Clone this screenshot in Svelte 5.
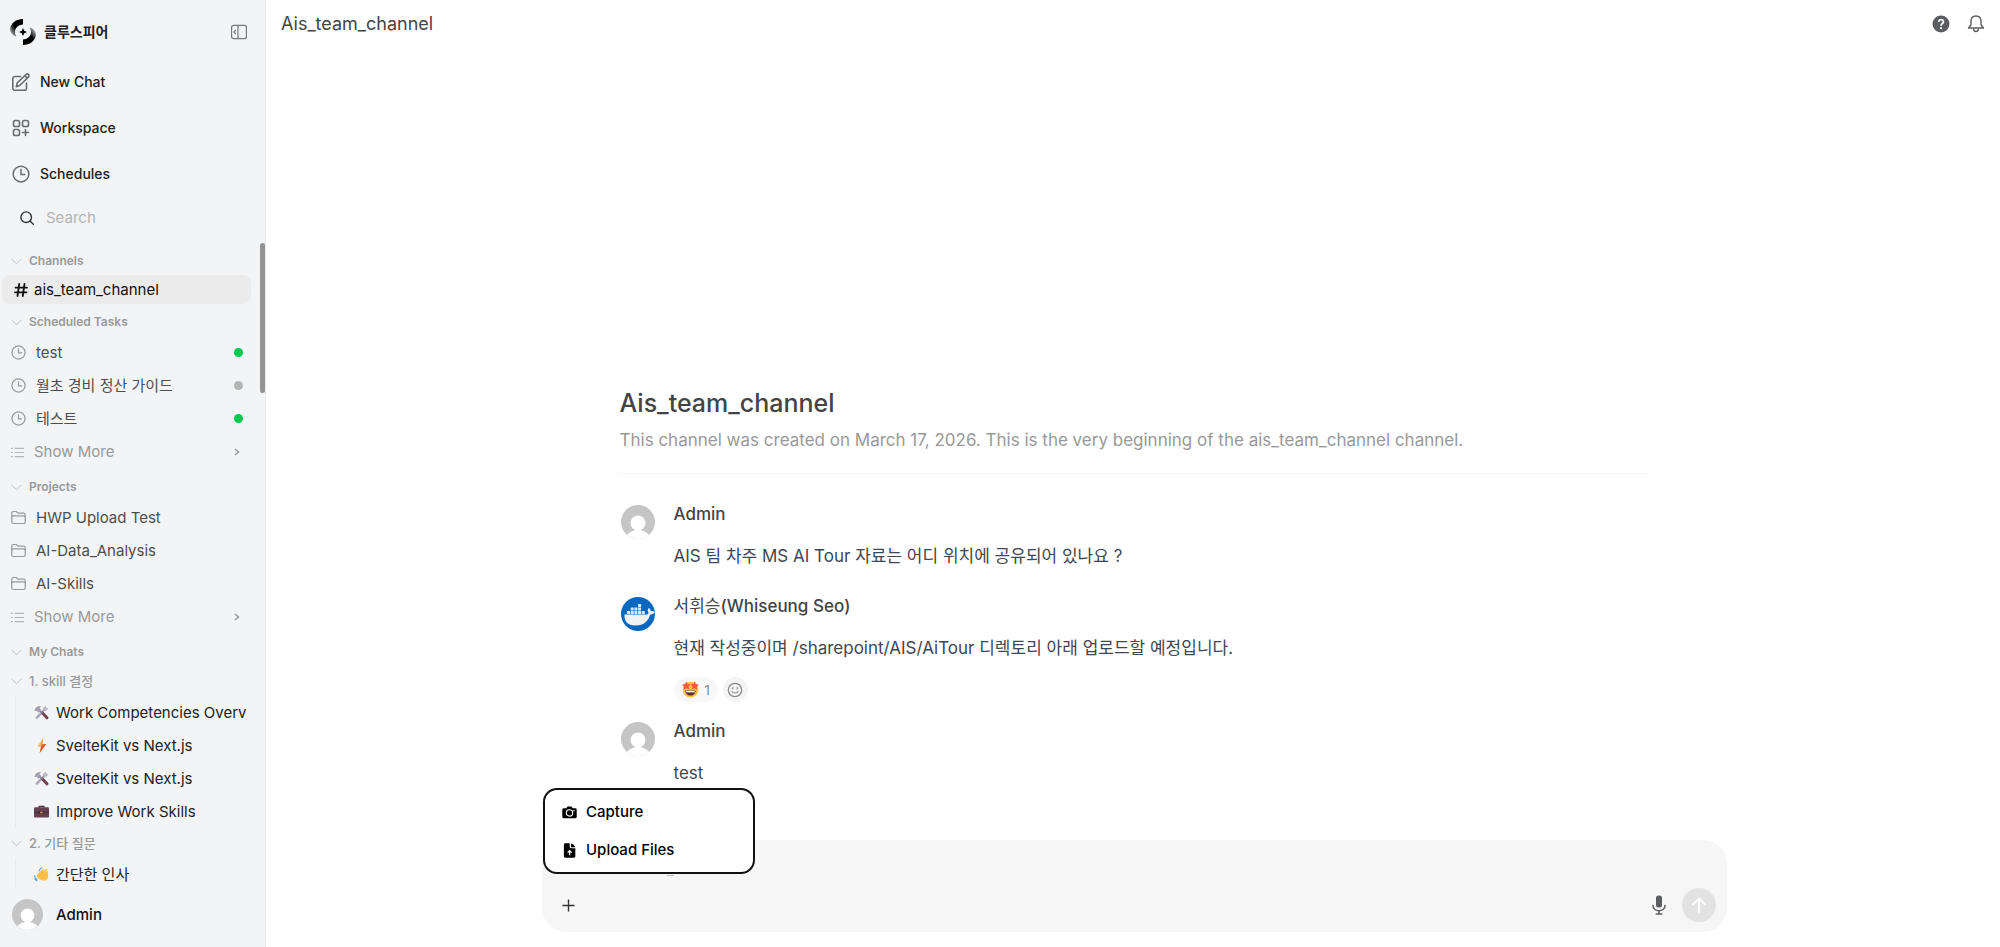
<script lang="ts">
	type Task = { name: string; active: boolean };
	type Chat = { icon: string; title: string };
	type Folder = { name: string; chats: Chat[] };
	type Message = {
		localName?: string;
		author: string;
		avatar: string;
		text: string;
		reactions?: number;
	};

	const navItems = [
		{ icon: 'edit', label: 'New Chat' },
		{ icon: 'grid', label: 'Workspace' },
		{ icon: 'clock', label: 'Schedules' }
	];

	const tasks: Task[] = [
		{ name: 'test', active: true },
		{ name: '월초 경비 정산 가이드', active: false },
		{ name: '테스트', active: true }
	];

	const projects = ['HWP Upload Test', 'AI-Data_Analysis', 'AI-Skills'];

	const folders: Folder[] = [
		{
			name: '1. skill 결정',
			chats: [
				{ icon: 'tools', title: 'Work Competencies Overv' },
				{ icon: 'bolt', title: 'SvelteKit vs Next.js' },
				{ icon: 'tools', title: 'SvelteKit vs Next.js' },
				{ icon: 'case', title: 'Improve Work Skills' }
			]
		},
		{ name: '2. 기타 질문', chats: [{ icon: 'wave', title: '간단한 인사' }] }
	];

	const messages: Message[] = [
		{
			author: 'Admin',
			avatar: 'user',
			text: 'AIS 팀 차주 MS AI Tour 자료는 어디 위치에 공유되어 있나요 ?'
		},
		{
			localName: '서휘승',
			author: '(Whiseung Seo)',
			avatar: 'docker',
			text: '현재 작성중이며 /sharepoint/AIS/AiTour 디렉토리 아래 업로드할 예정입니다.',
			reactions: 1
		},
		{ author: 'Admin', avatar: 'user', text: 'test' }
	];

	let search = $state('');
	let prompt = $state('');
	let menuOpen = $state(true);
</script>

{#snippet clock()}
	<svg viewBox="0 0 24 24" fill="none" stroke="currentColor" stroke-width="2" stroke-linecap="round">
		<circle cx="12" cy="12" r="10.5" />
		<path d="M12 6v6.5h5" />
	</svg>
{/snippet}

{#snippet userAvatar()}
	<svg viewBox="0 0 34 34">
		<circle cx="17" cy="17" r="17" fill="#c5c5c5" />
		<circle cx="17" cy="18" r="7.5" fill="#fff" />
		<path d="M6 30c2-3 7-5 11-5s9 2 11 5a17 17 0 0 1-22 0z" fill="#fff" />
	</svg>
{/snippet}

{#snippet sectionTitle(label: string)}
	<button class="section-title">
		<svg viewBox="0 0 12 12" fill="none" stroke="currentColor" stroke-linecap="round">
			<path d="M1 3.500l5 5 5-5" />
		</svg>
		<span>{label}</span>
	</button>
{/snippet}

{#snippet showMore()}
	<button class="show-more">
		<svg class="list-icon" viewBox="0 0 14 14" fill="none" stroke="currentColor" stroke-width="1.3">
			<path d="M4 2.5h10M4 7h10M4 11.5h10M0 2.5h2M0 7h2M0 11.5h2" />
		</svg>
		<span class="row-label">Show More</span>
		<svg class="chevron" viewBox="0 0 12 12" fill="none" stroke="currentColor" stroke-width="1.5">
			<path d="M4 3l3.5 3L4 9" />
		</svg>
	</button>
{/snippet}

{#snippet emoji(name: string)}
	<svg viewBox="0 0 16 16">
		{#if name === 'tools'}
			<path d="M3 13.500L12 4" stroke="#aba6b8" stroke-width="2.600" stroke-linecap="round" />
			<path d="M10 3l2.500-2.500.5 2.500 2.500.5L13 6l-3 .3z" fill="#b9b5c3" />
			<path d="M9 8.500l4.800 5.200" stroke="#75404e" stroke-width="3.200" stroke-linecap="round" />
			<path d="M5 5l4 4" stroke="#8c8796" stroke-width="2" />
			<path d="M.5 6.300C1 3 3.500 1 7.500 1.200L5.800 3.300l2 2.200-3 2.700-1.600-1.800z" fill="#a5a0b0" />
		{:else if name === 'bolt'}
			<path d="M10 0L4 9h3.6L6 16l7-9.5H9z" fill="#f58a3c" />
			<path d="M10 0L4 9h2.6z" fill="#ffc168" />
			<path d="M7.6 9L6 16l7-9.5-3 .2z" fill="#e4572e" />
		{:else if name === 'case'}
			<path d="M5.5 4V2.5h5V4" fill="none" stroke="#49303d" stroke-width="1.4" />
			<rect x="0" y="3.5" width="16" height="11" rx="1.2" fill="#65404f" />
			<path d="M0 9h16" stroke="#412c38" stroke-width="1" />
			<path d="M5 7.5h6v3H5z" fill="#422c38" />
			<path d="M6.5 8.2h3v1.6h-3z" fill="#d58b4c" />
		{:else if name === 'wave'}
			<path
				d="M3.5 8L9 2.2c1-.9 2 0 1.4 1L9 5l3.8-3c1-.7 1.800.3 1.200 1.200L12.500 5c2-1.200 3 0 2.500 1.500v5C14.500 14 12 15 9.500 14.500 6 14 4 12 3 10.500z"
				fill="#fcc54a"
			/>
			<path d="M5 9.500c3 0 4-2 4-4M8 12c2-.5 4-2.500 4-5" fill="none" stroke="#e79a35" stroke-width=".8" />
			<path
				d="M5.500 4C6 2.500 7 1 8.500.8M.5 9.500c.3 1.800 1 2.800 2.500 3.500M1 12.500c.4 1 1 1.500 2 2"
				fill="none"
				stroke="#55a5e0"
				stroke-width="1.300"
				stroke-linecap="round"
			/>
		{:else}
			<circle cx="8" cy="8.200" r="7.400" fill="#fcc13f" />
			<path d="M3.200 9h9.600c0 3-2 4.700-4.800 4.700S3.200 12 3.200 9z" fill="#61302c" />
			<path d="M4 9.300h8v1.400H4z" fill="#fff" />
			<path
				d="M4 .5l1.200 2.400 2.700.1-1.800 2.100.7 2.900L4.200 6.800 1.700 8l.4-2.700L0 3.300l2.800-.3zM12 .5l1.200 2.500 2.800.3-2.100 2 .4 2.700-2.500-1.200-2.600 1.200.7-2.900-1.800-2.100 2.700-.1z"
				fill="#ef5a36"
			/>
		{/if}
	</svg>
{/snippet}

<div class="app">
	<aside class="sidebar">
		<div class="brand">
			<svg class="logo" viewBox="0 0 26 26">
				<defs>
					<linearGradient id="fade-left" x1="1" y1="0" x2="0" y2="1">
						<stop offset=".55" stop-color="#000" />
						<stop offset="1" stop-color="#000" stop-opacity="0" />
					</linearGradient>
					<linearGradient id="fade-right" x1="0" y1="1" x2="1" y2="0">
						<stop offset=".55" stop-color="#000" />
						<stop offset="1" stop-color="#000" stop-opacity="0" />
					</linearGradient>
				</defs>
				<path d="M13 0v5.500C8 6 5 9 5 13c0 2 .6 3.300 1.500 4.500C2 16 0 13.500 0 10 1 4 6 0 13 0z" fill="url(#fade-left)" />
				<path d="M13 26v-5.500c5-.5 8-3.500 8-7.500 0-2-.6-3.300-1.500-4.500C24 10 26 12.500 26 16c-1 6-6 10-13 10z" fill="url(#fade-right)" />
				<path d="M13 9l1.200 2.800L17 13l-2.800 1.200L13 17l-1.200-2.800L9 13l2.800-1.200z" />
			</svg>
			<span class="brand-name">클루스피어</span>
			<button class="toggle" aria-label="Toggle sidebar">
				<svg viewBox="0 0 16 16" fill="none" stroke="currentColor" stroke-width="1.2">
					<rect x=".6" y="1.300" width="14.800" height="13.400" rx="2" />
					<path d="M7 1.300v13.400M4.800 6L3 8l1.800 2" />
				</svg>
			</button>
		</div>

		<nav>
			{#each navItems as item}
				<a class="nav-item" href="#{item.icon}">
					{#if item.icon === 'edit'}
						<svg viewBox="0 0 18 18" fill="none" stroke="currentColor" stroke-width="1.600" stroke-linejoin="round" stroke-linecap="round">
							<path d="M8.500 3.500H2.800a2 2 0 0 0-2 2v9.700a2 2 0 0 0 2 2h9.700a2 2 0 0 0 2-2V10" />
							<path d="M14 1.500a1.700 1.700 0 0 1 2.500 2.400L8 12.300l-3.700 1.400 1-3.800zM13 3l2.300 2.200" />
						</svg>
					{:else if item.icon === 'grid'}
						<svg viewBox="0 0 18 18" fill="none" stroke="currentColor" stroke-width="1.600" stroke-linecap="round">
							<rect x="1.500" y="1.500" width="6" height="6" rx="1.800" />
							<rect x="10.500" y="1.500" width="6" height="6" rx="1.800" />
							<rect x="1.500" y="10.500" width="6" height="6" rx="1.800" />
							<path d="M13.500 10.500v6M10.500 13.500h6" />
						</svg>
					{:else}
						{@render clock()}
					{/if}
					<span>{item.label}</span>
				</a>
			{/each}
		</nav>

		<label class="search">
			<svg viewBox="0 0 14 14" fill="none" stroke="currentColor" stroke-width="1.400" stroke-linecap="round">
				<circle cx="6.200" cy="6.200" r="5.300" />
				<path d="M10 10l3.300 3.300" />
			</svg>
			<input type="text" placeholder="Search" aria-label="Search" bind:value={search} />
		</label>

		<div class="scroll-area">
			<div class="scroll-thumb"></div>

			<section>
				{@render sectionTitle('Channels')}
				<a class="channel" href="#channel">
					<svg viewBox="0 0 14 14" fill="none" stroke="currentColor" stroke-width="1.800" stroke-linecap="round">
						<path d="M5.200 1L3.500 13M10.500 1L8.800 13M1.500 4.700h11.500M1 9.300h11.500" />
					</svg>
					<span>ais_team_channel</span>
				</a>
			</section>

			<section>
				{@render sectionTitle('Scheduled Tasks')}
				{#each tasks as task}
					<a class="row" href="#task">
						{@render clock()}
						<span class="row-label">{task.name}</span>
						<span class="status" class:active={task.active}></span>
					</a>
				{/each}
				{@render showMore()}
			</section>

			<section>
				{@render sectionTitle('Projects')}
				{#each projects as project}
					<a class="row" href="#project">
						<svg viewBox="0 0 15 15" fill="none" stroke="currentColor" stroke-width="1.200" stroke-linejoin="round">
							<path d="M.8 12V3a1.500 1.500 0 0 1 1.500-1.500h3l1.700 1.700h5.700a1.500 1.500 0 0 1 1.500 1.500V12a1.500 1.500 0 0 1-1.500 1.500H2.300A1.500 1.500 0 0 1 .8 12z" />
							<path d="M.8 7.300a1.500 1.500 0 0 1 1.500-1.500h10.400a1.500 1.500 0 0 1 1.500 1.500" />
						</svg>
						<span class="row-label">{project}</span>
					</a>
				{/each}
				{@render showMore()}
			</section>

			<section>
				{@render sectionTitle('My Chats')}
				{#each folders as folder}
					<div class="folder">
						{@render sectionTitle(folder.name)}
						<div class="folder-chats">
							{#each folder.chats as chat}
								<a class="chat" href="#chat">
									{@render emoji(chat.icon)}
									<span>{chat.title}</span>
								</a>
							{/each}
						</div>
					</div>
				{/each}
			</section>
		</div>

		<button class="account">
			{@render userAvatar()}
			<span>Admin</span>
		</button>
	</aside>

	<main>
		<header class="topbar">
			<span class="topbar-title">Ais_team_channel</span>
			<button aria-label="Help">
				<svg viewBox="0 0 18 18">
					<circle cx="9" cy="9" r="8.500" fill="#5c5d60" />
					<path d="M6.700 7c0-3 4.800-3 4.800-.2C11.500 8.500 9 8.500 9 10.700" fill="none" stroke="#fff" stroke-width="1.700" />
					<circle cx="9" cy="13.200" r="1.100" fill="#fff" />
				</svg>
			</button>
			<button aria-label="Notifications">
				<svg viewBox="0 0 18 18" fill="none" stroke="#5c5d60" stroke-width="1.400" stroke-linejoin="round">
					<path d="M9 1C5.800 1 4 3.300 4 6.300v3.500L1.500 13h15L14 9.800V6.300C14 3.300 12.200 1 9 1z" />
					<path d="M6.500 13.500c0 4 5 4 5 0" />
				</svg>
			</button>
		</header>

		<div class="messages">
			<div class="intro">
				<h1>Ais_team_channel</h1>
				<p>
					This channel was created on March 17, 2026. This is the very beginning of the
					ais_team_channel channel.
				</p>
			</div>

			{#each messages as message}
				<article class="message">
					<div class="avatar">
						{#if message.avatar === 'docker'}
							<svg viewBox="0 0 34 34">
								<circle cx="17" cy="17" r="17" fill="#0868c0" />
								<path
									d="M3.500 17.500h22c1.500 0 2-1 2-2-1.300-1.800-.8-3.500.5-4.500 1.200.8 1.700 2 1.600 3 1.500-.3 3 .1 4.200.8-.6 1.800-2.300 2.800-4.500 2.700C27 25 21.500 29 14 28.500 7 28.500 3 24.500 3.500 17.500z"
									fill="#f1f2f4"
								/>
								<path
									d="M6 14h3v3H6zM9.700 14h3v3h-3zM13.400 14h3v3h-3zM17.100 14h3v3h-3zM20.800 14h3v3h-3zM9.700 10.500h3v3h-3zM13.400 10.500h3v3h-3zM17.100 10.500h3v3h-3zM17.100 7h3v3h-3z"
									fill="#d9ebfb"
								/>
							</svg>
						{:else}
							{@render userAvatar()}
						{/if}
					</div>
					<div class="message-body">
						<div class="author">
							{#if message.localName}<span class="local-name">{message.localName}</span>{/if}{message.author}
						</div>
						<p>{message.text}</p>
						{#if message.reactions}
							<div class="reactions">
								<button class="reaction">
									{@render emoji('star')}
									<span>{message.reactions}</span>
								</button>
								<button class="add-reaction" aria-label="Add reaction">
									<svg viewBox="0 0 16 16" fill="none" stroke="currentColor" stroke-linecap="round">
										<circle cx="8" cy="8" r="6.700" stroke-width="1.200" />
										<path d="M5 9.500c1 2 5 2 6 0M5.800 5.500v1.300M10.200 5.500v1.300" stroke-width="1.200" />
									</svg>
								</button>
							</div>
						{/if}
					</div>
				</article>
			{/each}
		</div>

		<form class="composer">
			<textarea rows="1" aria-label="Message" bind:value={prompt}></textarea>
			<span class="caret-mark"></span>
			<div class="composer-actions">
				<button
					type="button"
					class="plus"
					aria-label="More"
					aria-expanded={menuOpen}
					onclick={() => (menuOpen = !menuOpen)}
				>
					<svg viewBox="0 0 14 14" fill="none" stroke="currentColor" stroke-width="1.500">
						<path d="M7 .5v13M.5 7h13" />
					</svg>
				</button>
				<button type="button" class="mic" aria-label="Voice input">
					<svg viewBox="0 0 14 20" fill="none" stroke="currentColor" stroke-width="1.600" stroke-linecap="round">
						<rect x="4" y=".5" width="6" height="12" rx="2.500" fill="currentColor" stroke="none" />
						<path d="M1 10.500c0 7 12 7 12 0M7 16v3M4.300 19h5.400" />
					</svg>
				</button>
				<button type="submit" class="send" aria-label="Send" disabled>
					<svg viewBox="0 0 16 16" fill="none" stroke="#fff" stroke-width="1.800" stroke-linecap="round" stroke-linejoin="round">
						<path d="M8 15V1.500M2 7.500l6-6 6 6" />
					</svg>
				</button>
			</div>

			{#if menuOpen}
				<div class="menu">
					<button type="button">
						<svg viewBox="0 0 16 16">
							<path d="M4.500 3.500L6 1.500h4l1.500 2H14A1.700 1.700 0 0 1 15.700 5v7.500a1.700 1.700 0 0 1-1.700 1.700H2a1.700 1.700 0 0 1-1.700-1.700V5A1.700 1.700 0 0 1 2 3.500z" />
							<circle cx="8" cy="8.500" r="3.400" fill="none" stroke="#fff" stroke-width="1.200" />
							<circle cx="12.800" cy="6" r=".8" fill="#fff" />
						</svg>
						<span>Capture</span>
					</button>
					<button type="button">
						<svg viewBox="0 0 16 16">
							<path d="M3.500.3h4.700v3.500A1.700 1.700 0 0 0 9.900 5.500h4.300v8.700a1.500 1.500 0 0 1-1.500 1.500H3.500A1.500 1.500 0 0 1 2 14.200V1.800A1.500 1.500 0 0 1 3.500.3z" />
							<path d="M9.500.5c2 .5 4.300 2 4.600 3.900H9.500z" />
							<path d="M8.200 13V8.500M6 10.300l2.200-2.200 2.200 2.200" fill="none" stroke="#fff" stroke-width="1.300" />
						</svg>
						<span>Upload Files</span>
					</button>
				</div>
			{/if}
		</form>
	</main>
</div>

<style>
	:global(body) {
		background: #fff;
		font-family: Inter, 'Noto Sans CJK KR', sans-serif;
	}

	.app {
		display: flex;
		height: 100vh;
		overflow: hidden;
		font-size: 15px;
		line-height: 20px;
		color: #222;
	}

	button {
		display: flex;
		align-items: center;
		padding: 0;
		border: none;
		background: none;
		color: inherit;
		font: inherit;
		text-align: left;
		cursor: pointer;
	}

	a {
		color: inherit;
		text-decoration: none;
	}

	svg {
		display: block;
		flex-shrink: 0;
	}

	h1,
	p {
		margin: 0;
	}

	.sidebar {
		display: flex;
		flex-direction: column;
		flex-shrink: 0;
		box-sizing: border-box;
		width: 266px;
		border-right: 1px solid #e6e8eb;
		background: #f2f4f6;
	}

	.brand {
		display: flex;
		align-items: center;
		padding: 19px 18px 14px 10px;
		font-size: 14px;
	}

	.logo {
		width: 26px;
		height: 26px;
	}

	.brand-name {
		flex: 1;
		margin-left: 8px;
		font-weight: 700;
	}

	.toggle {
		color: #777;
	}

	.toggle svg {
		width: 16px;
		height: 16px;
	}

	.nav-item {
		display: flex;
		align-items: center;
		gap: 10px;
		height: 46px;
		padding-left: 12px;
		font-size: 14px;
		font-weight: 500;
	}

	.nav-item svg {
		width: 18px;
		height: 18px;
		color: #6b6b6b;
	}

	.search {
		display: flex;
		align-items: center;
		gap: 12px;
		height: 42px;
		padding: 0 20px;
		color: #333;
	}

	.search svg {
		width: 14px;
		height: 14px;
	}

	.search input {
		min-width: 0;
		padding: 0;
		border: none;
		outline: none;
		background: none;
		font: inherit;
	}

	.search input::placeholder {
		color: #b4b4b4;
	}

	.scroll-area {
		position: relative;
		flex: 1;
		min-height: 0;
		padding-top: 8px;
		overflow: hidden;
	}

	.scroll-thumb {
		position: absolute;
		top: 4px;
		right: 0;
		width: 5px;
		height: 150px;
		border-radius: 3px;
		background: #939393;
	}

	section {
		margin-bottom: 4px;
	}

	.section-title {
		gap: 7px;
		width: 100%;
		height: 28px;
		padding-left: 11px;
		color: #999;
		font-size: 12px;
		font-weight: 600;
	}

	.section-title svg {
		width: 11px;
		height: 11px;
		color: #bbb;
	}

	.channel {
		display: flex;
		align-items: center;
		gap: 6px;
		height: 29px;
		margin: 0 14px 0 2px;
		padding-left: 12px;
		border-radius: 8px;
		background: #ebebeb;
		color: #111;
	}

	.channel svg {
		width: 14px;
		height: 14px;
	}

	.row,
	.show-more {
		display: flex;
		align-items: center;
		gap: 10px;
		box-sizing: border-box;
		width: 100%;
		height: 33px;
		padding: 0 22px 0 11px;
		color: #4e4e4e;
	}

	.row svg {
		width: 15px;
		height: 15px;
		color: #999;
	}

	.row-label {
		flex: 1;
	}

	.show-more {
		height: 34px;
		color: #999;
	}

	.show-more .list-icon {
		width: 13px;
		height: 13px;
		color: #b4b4b4;
	}

	.show-more .chevron {
		width: 12px;
		height: 12px;
	}

	.status {
		width: 9px;
		height: 9px;
		border-radius: 50%;
		background: #b4b4b4;
	}

	.status.active {
		background: #00c950;
	}

	.folder .section-title {
		height: 30px;
		font-size: 13px;
		font-weight: 500;
	}

	.folder-chats {
		margin-left: 15px;
		border-left: 1px solid #e8eaec;
	}

	.chat {
		display: flex;
		align-items: center;
		gap: 7px;
		height: 33px;
		margin-right: 14px;
		padding-left: 18px;
		color: #222;
		white-space: nowrap;
		overflow: hidden;
	}

	.chat svg {
		width: 15px;
		height: 15px;
	}

	.account {
		gap: 13px;
		height: 58px;
		padding: 0 12px 7px;
		box-sizing: border-box;
		font-weight: 500;
		color: #111;
	}

	.account svg {
		width: 31px;
		height: 31px;
	}

	main {
		display: flex;
		flex: 1;
		flex-direction: column;
		min-width: 0;
		padding: 0 0 15px 3px;
	}

	.topbar {
		display: flex;
		align-items: center;
		gap: 17px;
		height: 48px;
		padding: 0 15px 0 12px;
	}

	.topbar-title {
		flex: 1;
		font-size: 18px;
		color: #444;
	}

	.topbar svg {
		width: 18px;
		height: 18px;
	}

	.messages {
		display: flex;
		flex: 1;
		flex-direction: column;
		justify-content: flex-end;
		box-sizing: border-box;
		width: 100%;
		max-width: 1030px;
		min-height: 0;
		margin: 0 auto;
		padding-bottom: 29px;
		font-size: 17px;
		line-height: 24px;
	}

	.intro {
		padding-bottom: 21px;
		margin-bottom: 28px;
		border-bottom: 1px solid #f5f5f5;
		color: #999;
	}

	.intro h1 {
		margin-bottom: 9px;
		font-size: 25px;
		font-weight: 500;
		line-height: 32px;
		color: #444;
	}

	.message {
		display: flex;
		gap: 19px;
		padding: 0 0 17px 1px;
	}

	.avatar svg {
		width: 34px;
		height: 34px;
		margin-top: 3px;
	}

	.author {
		font-weight: 500;
		color: #444;
	}

	.local-name {
		font-weight: 400;
	}

	.message p {
		margin: 18px 0 9px;
		color: #3f4654;
	}

	.reactions {
		display: flex;
		gap: 5px;
		margin-top: 17px;
	}

	.reaction,
	.add-reaction {
		height: 25px;
		border-radius: 13px;
		background: #f8f8f8;
		color: #888;
		font-size: 13px;
	}

	.reaction {
		gap: 6px;
		padding: 0 8px;
	}

	.reaction svg {
		width: 17px;
		height: 17px;
	}

	.add-reaction {
		justify-content: center;
		width: 25px;
		background: #f4f4f4;
	}

	.add-reaction svg {
		width: 16px;
		height: 16px;
	}

	.composer {
		position: relative;
		box-sizing: border-box;
		width: calc(100% - 40px);
		max-width: 1185px;
		margin: 0 auto;
		padding: 14px 11px 10px 20px;
		border-radius: 24px;
		background: #f6f6f6;
	}

	textarea {
		display: block;
		box-sizing: border-box;
		width: 100%;
		height: 34px;
		padding: 0;
		border: none;
		outline: none;
		resize: none;
		background: none;
		font: inherit;
	}

	.caret-mark {
		position: absolute;
		top: 35px;
		left: 125px;
		width: 7px;
		height: 1px;
		background: #b4bcc8;
	}

	.composer-actions {
		display: flex;
		align-items: center;
		height: 34px;
	}

	.plus {
		margin-right: auto;
		color: #333;
	}

	.plus svg {
		width: 13px;
		height: 13px;
	}

	.mic {
		margin-right: 16px;
		color: #5c5d60;
	}

	.mic svg {
		width: 14px;
		height: 20px;
	}

	.send {
		justify-content: center;
		width: 34px;
		height: 34px;
		border-radius: 50%;
		background: #e2e2e2;
	}

	.send svg {
		width: 16px;
		height: 16px;
	}

	.menu {
		position: absolute;
		left: 1px;
		bottom: 58px;
		box-sizing: border-box;
		width: 212px;
		padding: 3px 4px;
		border: 2px solid #111;
		border-radius: 14px;
		background: #fff;
	}

	.menu button {
		gap: 9px;
		width: 100%;
		height: 38px;
		padding-left: 13px;
		font-weight: 500;
		color: #000;
	}

	.menu svg {
		width: 15px;
		height: 15px;
	}
</style>
